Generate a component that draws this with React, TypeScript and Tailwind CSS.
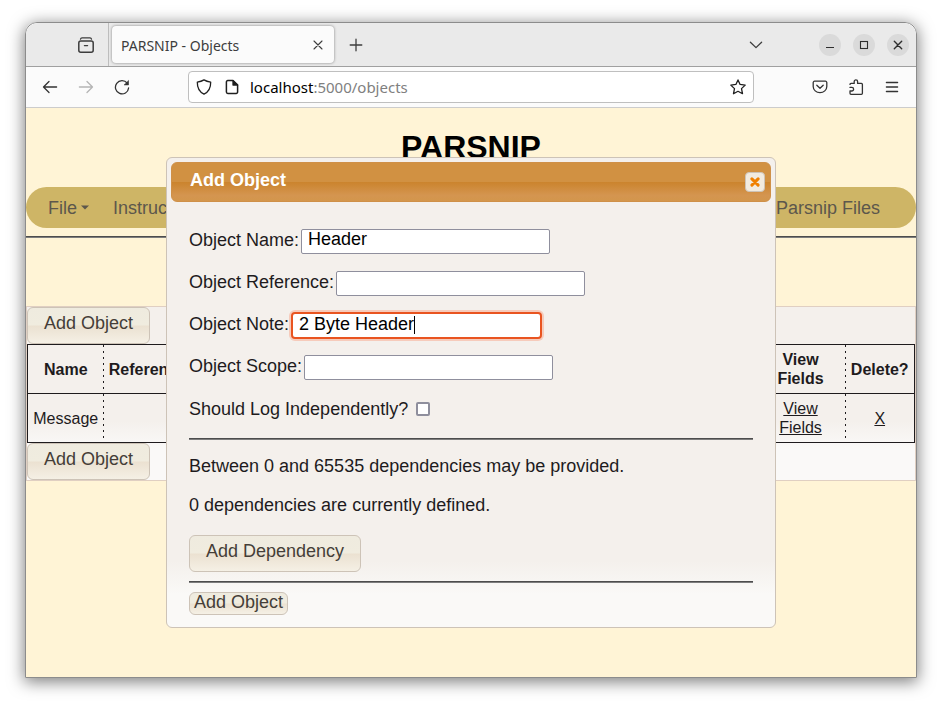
import { useState, type ReactNode } from "react";

function Icon({ children, className = "" }: { children: ReactNode; className?: string }) {
  return (
    <svg
      viewBox="0 0 16 16"
      className={`size-4 shrink-0 ${className}`}
      fill="none"
      stroke="currentColor"
      strokeWidth="1.3"
      strokeLinecap="round"
      strokeLinejoin="round"
      aria-hidden="true"
    >
      {children}
    </svg>
  );
}

function ToolButton({ label, children, className = "" }: { label: string; children: ReactNode; className?: string }) {
  return (
    <button type="button" aria-label={label} className={`flex size-9 shrink-0 items-center justify-center ${className}`}>
      {children}
    </button>
  );
}

function WindowButton({ label, children }: { label: string; children: ReactNode }) {
  return (
    <button
      type="button"
      aria-label={label}
      className="flex size-[22px] shrink-0 items-center justify-center rounded-full bg-[#dadada] text-[#2e2e2e]"
    >
      {children}
    </button>
  );
}

function TabStrip() {
  return (
    <div className="flex h-11 items-center rounded-t-xl border-b border-[#a0a0a0] bg-[#eaeaea] pr-[7px] text-[#3d3d3d]">
      <div className="flex h-full w-[83px] shrink-0 items-center justify-end border-r border-[#bdbdbd] pr-1">
        <ToolButton label="Recent browsing">
          <Icon>
            <path d="M2.5 2.2 Q2.8 .9 4 .9 H12 Q13.2 .9 13.5 2.2" />
            <rect x=".8" y="4" width="14.4" height="11.2" rx="2" strokeWidth="1.5" />
            <path d="M6.4 8.6h3.2" />
          </Icon>
        </ToolButton>
      </div>
      <div className="ml-[3px] flex h-[37px] w-[222px] items-center rounded bg-[#fbfbfb] px-2 shadow-[0_0_3px_rgba(0,0,0,0.45)]">
        <span className="flex-1 whitespace-nowrap pt-0.5 pl-px text-sm">PARSNIP - Objects</span>
        <button type="button" aria-label="Close tab">
          <Icon>
            <path d="M4 4l8 8M12 4l-8 8" strokeWidth="1.1" />
          </Icon>
        </button>
      </div>
      <ToolButton label="New tab" className="ml-1">
        <Icon>
          <path d="M8 2.2v11.6M2.2 8h11.6" />
        </Icon>
      </ToolButton>
      <ToolButton label="List all tabs" className="ml-auto mr-[45px]">
        <Icon>
          <path d="M2.4 5.2L8 10.6l5.6-5.4" />
        </Icon>
      </ToolButton>
      <div className="flex gap-3">
        <WindowButton label="Minimize">
          <Icon>
            <path d="M4 10.5h8" strokeLinecap="butt" strokeWidth="1" />
          </Icon>
        </WindowButton>
        <WindowButton label="Maximize">
          <Icon>
            <rect x="4.5" y="4.5" width="7" height="7" strokeLinejoin="miter" strokeWidth="1.1" />
          </Icon>
        </WindowButton>
        <WindowButton label="Close">
          <Icon>
            <path d="M4.3 4.3l7.4 7.4M11.7 4.3l-7.4 7.4" strokeWidth="1.4" />
          </Icon>
        </WindowButton>
      </div>
    </div>
  );
}

function NavBar() {
  return (
    <div className="flex h-[41px] items-center border-b border-[#cccccc] bg-[#fbfbfb] px-1.5 text-[#333333]">
      <ToolButton label="Back">
        <Icon>
          <path d="M14.6 8H1.5M7 2.5L1.5 8L7 13.5" />
        </Icon>
      </ToolButton>
      <ToolButton label="Forward" className="text-[#b5b5b5]">
        <Icon>
          <path d="M1.4 8h13.1M9 2.5L14.5 8L9 13.5" />
        </Icon>
      </ToolButton>
      <ToolButton label="Reload">
        <Icon>
          <path d="M13.2 4.2A6.6 6.6 0 1 0 14.6 9" />
          <path d="M14.5 1.8v4.1H10.4z" fill="currentColor" strokeWidth=".6" />
        </Icon>
      </ToolButton>
      <div className="ml-12 mr-12 flex h-8 flex-1 items-center rounded border border-[#bfbfbf] bg-white px-[7px] text-[#1f1f1f]">
        <Icon>
          <path d="M8 .9C6 2.2 3.8 2.8 1.3 3.1C1.2 8.8 3.2 13 8 15.2C12.8 13 14.8 8.8 14.7 3.1C12.2 2.8 10 2.2 8 .9z" />
        </Icon>
        <Icon className="ml-3">
          <path d="M3.8 1.6H9L13.6 6V13a1.4 1.4 0 0 1-1.4 1.4H3.8A1.4 1.4 0 0 1 2.4 13V3A1.4 1.4 0 0 1 3.8 1.6z" strokeWidth="1.5" />
          <path d="M9 1.6V6h4.6z" fill="currentColor" />
        </Icon>
        <span className="ml-2.5 flex-1 whitespace-nowrap text-[15px] text-[#808080]">
          <span className="text-black">localhost</span>:5000/objects
        </span>
        <button type="button" aria-label="Bookmark this page">
          <Icon>
            <path d="M8 .9L10.1 5.4L15.2 6.1L11.5 9.6L12.5 14.7L8 12.3L3.5 14.7L4.5 9.6L.8 6.1L5.9 5.4z" />
          </Icon>
        </button>
      </div>
      <ToolButton label="Save to Pocket">
        <Icon>
          <path d="M2.6 2.2h10.8a1.4 1.4 0 0 1 1.4 1.4V7.4a6.8 6.3 0 0 1-13.6 0V3.6a1.4 1.4 0 0 1 1.4-1.4z" />
          <path d="M4.8 6.2L8 9.2l3.2-3" />
        </Icon>
      </ToolButton>
      <ToolButton label="Extensions">
        <Icon>
          <path d="M2 5.4a1 1 0 0 1 1-1h3.2V2.6a1.7 1.7 0 0 1 3.4 0v1.8h3.8a1 1 0 0 1 1 1v8.9a1 1 0 0 1-1 1H3a1 1 0 0 1-1-1V12h1.8a1.7 1.7 0 0 0 0-3.6H2" />
        </Icon>
      </ToolButton>
      <ToolButton label="Open menu">
        <Icon>
          <path d="M2.4 3.5h11.2M2.4 8h11.2M2.4 12.5h11.2" />
        </Icon>
      </ToolButton>
    </div>
  );
}

const buttonSkin =
  "rounded-md border border-[#cdc3b7] bg-[linear-gradient(#efebdf_0%,#f0ecdf_49%,#ebe1d1_51%,#f5f0e5_100%)] text-[#453e38]";

function BigButton({ children }: { children: ReactNode }) {
  return (
    <button type="button" className={`block h-[37px] whitespace-nowrap px-4 pb-1.5 text-lg leading-none ${buttonSkin}`}>
      {children}
    </button>
  );
}

function Rule() {
  return <hr className="h-0.5 border-t border-b border-t-[#4d4d4d] border-b-[#7d7d7d]" />;
}

const cell = "border-y border-[#1e1b1d] px-[5px] py-1 leading-[19px]";
const dotted =
  "bg-[repeating-linear-gradient(#1e1b1d_0_2px,transparent_2px_6px)] bg-size-[1px_100%] bg-right bg-no-repeat";

function ObjectsPage() {
  return (
    <>
      <h1 className="pt-[19px] text-center text-[32px] leading-10 font-bold text-black">PARSNIP</h1>
      <nav className="mt-5 flex h-[41px] items-center rounded-full bg-[#ceb566] pr-9 pl-[22px] text-lg text-[#5c574c]">
        <button type="button" className="flex items-center">
          File
          <svg viewBox="0 0 10 5" className="ml-[3px] h-[5px] w-2.5" aria-hidden="true">
            <path d="M1 .5h8L5 4.5z" fill="currentColor" />
          </svg>
        </button>
        <a href="#instructions" className="ml-[23px]">Instructions</a>
        <a href="#files" className="ml-auto">Parsnip Files</a>
      </nav>
      <div className="mt-2">
        <Rule />
      </div>
      <section className="mt-[68px] border border-[#e0cfc2] bg-[linear-gradient(#f4f0ec_0%,#f4f0ec_66%,#faf9f8_82%,#faf9f8_100%)]">
        <BigButton>Add Object</BigButton>
        <table className="w-full table-fixed border-collapse border border-[#1e1b1d] text-center text-base text-[#1e1b1d]">
          <colgroup>
            <col className="w-[76px]" />
            <col className="w-[88px]" />
            <col />
            <col className="w-[90px]" />
            <col className="w-[69px]" />
          </colgroup>
          <thead>
            <tr className="h-[49px]">
              <th className={`${cell} ${dotted}`}>Name</th>
              <th className={`${cell} ${dotted}`}>Reference</th>
              <td className={`${cell} ${dotted}`} />
              <th className={`${cell} ${dotted}`}>View Fields</th>
              <th className={cell}>Delete?</th>
            </tr>
          </thead>
          <tbody>
            <tr className="h-[49px]">
              <td className={`${cell} ${dotted}`}>Message</td>
              <td className={`${cell} ${dotted}`} />
              <td className={`${cell} ${dotted}`} />
              <td className={`${cell} ${dotted}`}>
                <a href="#fields" className="underline">View Fields</a>
              </td>
              <td className={cell}>
                <a href="#delete" className="underline">X</a>
              </td>
            </tr>
          </tbody>
        </table>
        <BigButton>Add Object</BigButton>
      </section>
    </>
  );
}

function Field({ id, label, value, onChange, active }: {
  id: string;
  label: string;
  value: string;
  onChange: (value: string) => void;
  active?: boolean;
}) {
  const skin = active
    ? "h-[27px] w-[251px] rounded-sm border-2 border-[#e95420] pb-[3px] shadow-[0_0_0_2px_#f6cbbb]"
    : "h-[25px] w-[249px] rounded-xs border border-[#8f8f9d] pb-1";
  return (
    <div className="flex h-[27px] items-center gap-0.5">
      <label htmlFor={id} className="pb-1">{label}</label>
      <div className="relative flex items-center">
        <input
          id={id}
          type="text"
          value={value}
          onChange={(event) => onChange(event.target.value)}
          className={`bg-white px-1.5 text-lg leading-5 text-black outline-none ${skin}`}
        />
        {active && (
          <span aria-hidden="true" className="pointer-events-none absolute top-1 left-2 flex h-[18px]">
            <span className="invisible whitespace-pre">{value}</span>
            <span className="w-px bg-black" />
          </span>
        )}
      </div>
    </div>
  );
}

function AddObjectDialog() {
  const [values, setValues] = useState({ name: "Header", reference: "", note: "2 Byte Header", scope: "" });
  const [logs, setLogs] = useState(false);
  const update = (key: keyof typeof values) => (value: string) => setValues({ ...values, [key]: value });

  return (
    <div
      role="dialog"
      aria-labelledby="dialog-title"
      className="absolute inset-x-0 top-[49px] mx-auto w-[610px] rounded-md border border-[#cdc3b7] bg-[linear-gradient(#f4f0ec_0%,#f4f0ec_86%,#faf9f7_93%,#faf9f7_100%)] p-1 text-lg text-[#1e1b1d]"
    >
      <div className="flex h-10 items-center justify-between rounded-md border border-[#cf9048] bg-[linear-gradient(#d19142_0%,#d19142_49%,#cb842e_51%,#d49550_85%,#d3964c_100%)] pr-[5px] pl-[18px]">
        <h2 id="dialog-title" className="pb-1 font-bold text-white">Add Object</h2>
        <button
          type="button"
          aria-label="Close dialog"
          className="flex size-5 items-center justify-center rounded border border-[#cdc3b7] bg-[#f2ebdf]"
        >
          <svg viewBox="0 0 10 10" className="size-2.5" aria-hidden="true">
            <path d="M1.9 1.9l6.2 6.2M8.1 1.9L1.9 8.1" stroke="#f08000" strokeWidth="3" strokeLinecap="round" />
          </svg>
        </button>
      </div>
      <form className="px-[18px] pt-[26px] pb-2" onSubmit={(event) => event.preventDefault()}>
        <div className="flex flex-col gap-[15px]">
          <Field id="name" label="Object Name:" value={values.name} onChange={update("name")} />
          <Field id="reference" label="Object Reference:" value={values.reference} onChange={update("reference")} />
          <Field id="note" label="Object Note:" value={values.note} onChange={update("note")} active />
          <Field id="scope" label="Object Scope:" value={values.scope} onChange={update("scope")} />
          <div className="flex h-[25px] items-center gap-2">
            <label htmlFor="logs">Should Log Independently?</label>
            <input
              id="logs"
              type="checkbox"
              checked={logs}
              onChange={(event) => setLogs(event.target.checked)}
              className="size-3.5 appearance-none rounded-xs border-2 border-[#8f8f9d] bg-white checked:bg-[#e95420]"
            />
          </div>
        </div>
        <div className="mt-[17px]">
          <Rule />
        </div>
        <p className="mt-3 leading-7">Between 0 and 65535 dependencies may be provided.</p>
        <p className="mt-[11px] mb-4 leading-7">0 dependencies are currently defined.</p>
        <BigButton>Add Dependency</BigButton>
        <div className="my-[9px]">
          <Rule />
        </div>
        <button type="submit" className={`block h-[23px] px-1 pb-1.5 whitespace-nowrap leading-none ${buttonSkin}`}>
          Add Object
        </button>
      </form>
    </div>
  );
}

export default function App() {
  return (
    <div className="flex min-h-screen bg-white px-[25px] pt-[22px] pb-7 font-['Liberation_Sans',Arial,sans-serif]">
      <div className="flex flex-1 flex-col rounded-t-xl border border-[#8c8c8c] shadow-[0_3px_16px_1px_rgba(0,0,0,0.5)]">
        <header className="font-['Noto_Sans','Open_Sans',sans-serif]">
          <TabStrip />
          <NavBar />
        </header>
        <main className="relative flex-1 bg-[#fff4d6]">
          <ObjectsPage />
          <AddObjectDialog />
        </main>
      </div>
    </div>
  );
}
